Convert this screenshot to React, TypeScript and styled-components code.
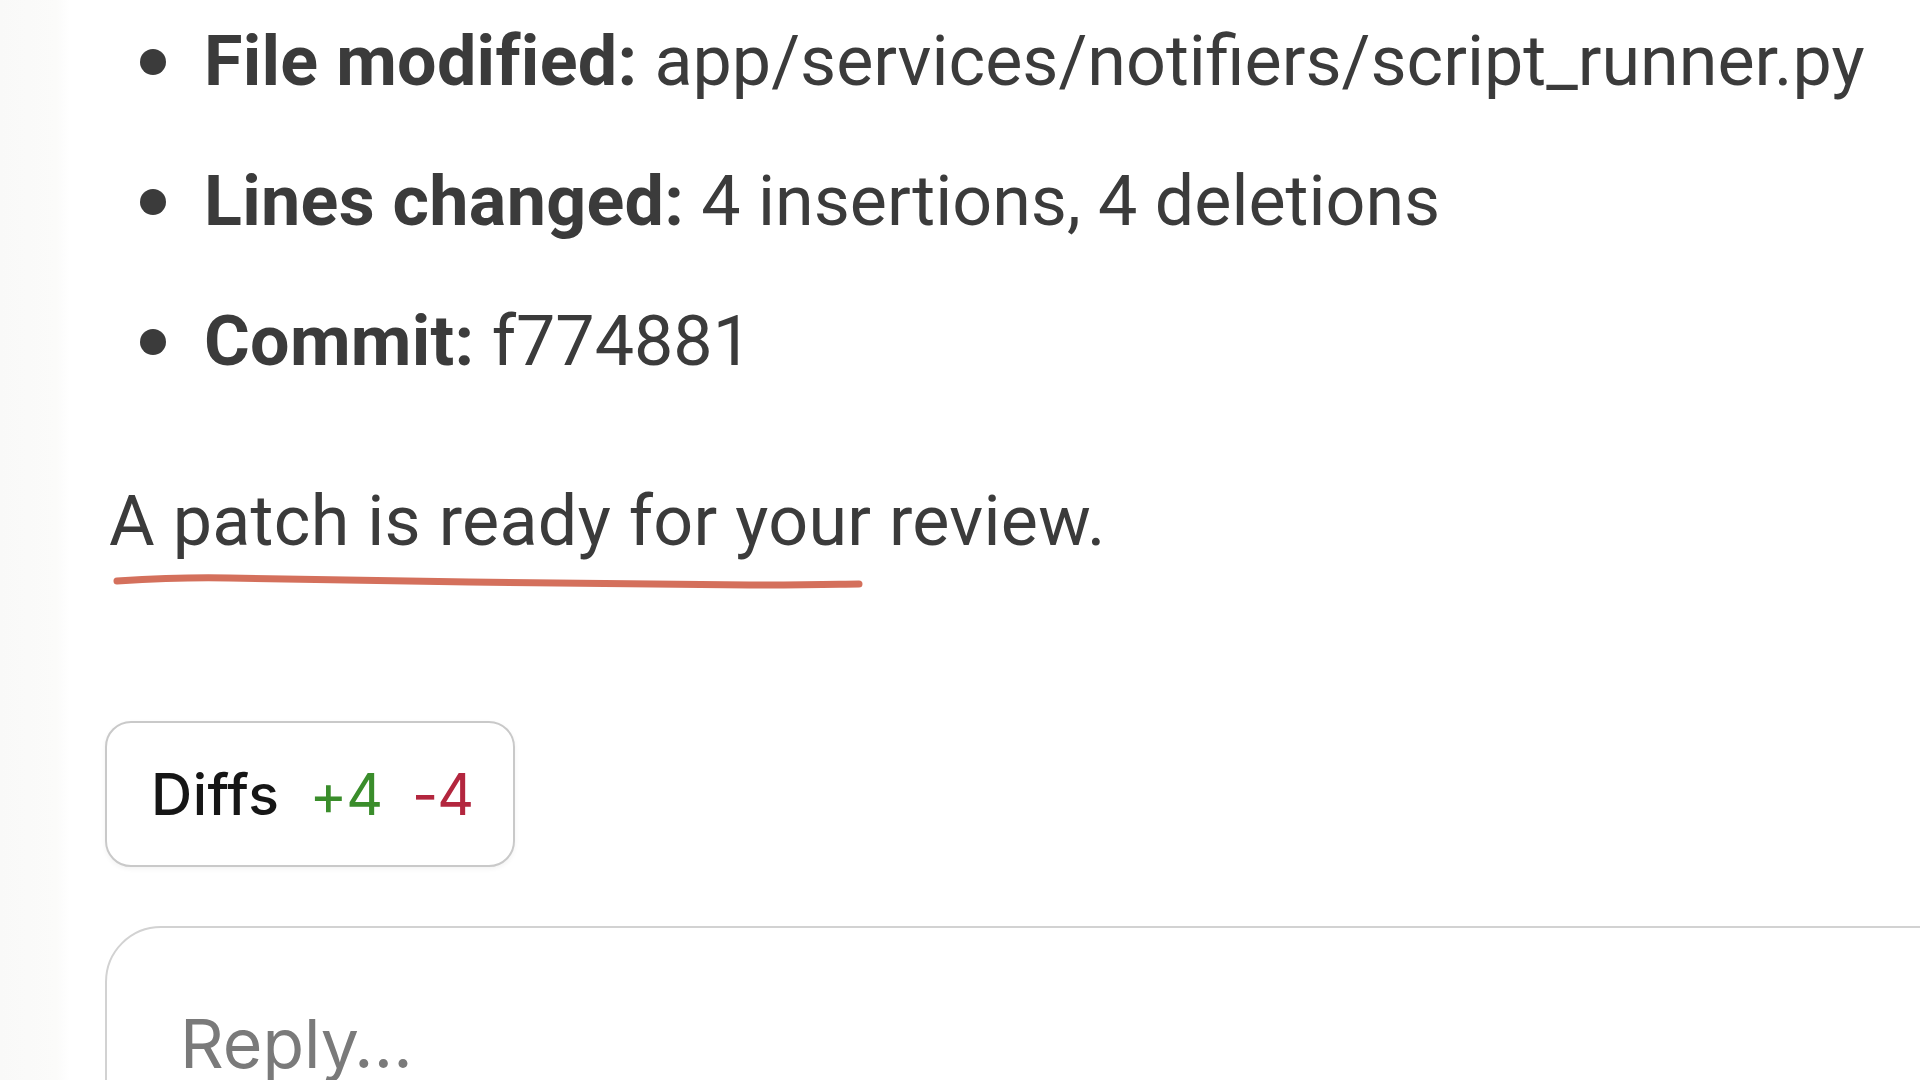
import React from "react";
import styled, { createGlobalStyle } from "styled-components";

const GlobalStyle = createGlobalStyle`
    html, body {
        margin: 0;
        padding: 0;
        background: #ffffff;
        overflow: hidden;
    }
    body {
        font-family: Roboto, "Liberation Sans", sans-serif;
        color: #3b3b3b;
    }
`;

const Page = styled.div`
    display: flex;
    width: 1920px;
    height: 1080px;
    overflow: hidden;
`;

const Gutter = styled.div`
    flex: 0 0 70px;
    background: linear-gradient(to right, #f9f9f8 0%, #fbfbfa 80%, #ffffff 100%);
`;

const Main = styled.main`
    flex: 1;
    display: flex;
    flex-direction: column;
    padding: 16px 0 0 35px;
    min-width: 0;

    & > * {
        flex-shrink: 0;
    }
`;

const List = styled.ul`
    list-style: none;
    margin: 0;
    padding: 0 0 0 35px;
    display: flex;
    flex-direction: column;
    gap: 49px;
`;

const Item = styled.li`
    display: flex;
    align-items: center;
    height: 91px;
    font-size: 70px;
    line-height: 91px;
    white-space: nowrap;
`;

const Dot = styled.span`
    flex: 0 0 26px;
    width: 26px;
    height: 26px;
    border-radius: 50%;
    background: #3b3b3b;
    margin-right: 38px;
`;

const Label = styled.strong`
    font-weight: 700;
    margin-right: 17px;
    letter-spacing: 0.3px;
`;

const Note = styled.p`
    position: relative;
    margin: 89px 0 0 4px;
    font-size: 70px;
    line-height: 91px;
    letter-spacing: 0.3px;
    white-space: nowrap;
`;

const Scribble = styled.svg`
    position: absolute;
    left: 0;
    top: 97px;
    width: 760px;
    height: 20px;
    overflow: visible;
`;

const DiffsButton = styled.button`
    align-self: flex-start;
    display: flex;
    align-items: center;
    gap: 30px;
    height: 146px;
    margin-top: 154px;
    padding: 0 40px 0 44px;
    background: #ffffff;
    border: 2px solid #c9c9c9;
    border-radius: 26px;
    box-shadow: 0 2px 5px rgba(0, 0, 0, 0.05);
    font-family: Inter, "Liberation Sans", sans-serif;
    font-size: 57px;
    cursor: pointer;
`;

const Stat = styled.span<{ $tone: "plain" | "add" | "del" }>`
    color: ${(p) =>
        p.$tone === "add" ? "#3a8d2b" : p.$tone === "del" ? "#b3263e" : "#161616"};
    font-weight: ${(p) => (p.$tone === "plain" ? 500 : 400)};
    letter-spacing: ${(p) => (p.$tone === "plain" ? "0.5px" : "-1px")};
`;

const ReplyBox = styled.div`
    margin-top: 59px;
    width: calc(100% + 120px);
    height: 320px;
    box-sizing: border-box;
    border: 2px solid #d2d2d2;
    border-radius: 56px;
    background: #ffffff;
    padding: 81px 0 0 73px;
`;

const ReplyInput = styled.div`
    font-family: Inter, "Liberation Sans", sans-serif;
    font-size: 68px;
    line-height: 1;
    color: #7a7a7a;
`;

const details = [
    { label: "File modified:", value: "app/services/notifiers/script_runner.py" },
    { label: "Lines changed:", value: "4 insertions, 4 deletions" },
    { label: "Commit:", value: "f774881" },
];

function App() {
    return (
        <>
            <GlobalStyle />
            <Page>
                <Gutter />
                <Main>
                    <List>
                        {details.map((d) => (
                            <Item key={d.label}>
                                <Dot />
                                <Label>{d.label}</Label>
                                {d.value}
                            </Item>
                        ))}
                    </List>
                    <Note>
                        A patch is ready for your review.
                        <Scribble viewBox="0 0 760 20">
                            <path
                                d="M8 8 C 40 6, 80 4, 120 5 S 260 8, 360 9 S 560 12, 640 12 S 730 11, 750 11"
                                fill="none"
                                stroke="#d4705c"
                                strokeWidth="7"
                                strokeLinecap="round"
                            />
                        </Scribble>
                    </Note>
                    <DiffsButton>
                        <Stat $tone="plain">Diffs</Stat>
                        <Stat $tone="add">+4</Stat>
                        <Stat $tone="del">-4</Stat>
                    </DiffsButton>
                    <ReplyBox>
                        <ReplyInput>Reply…</ReplyInput>
                    </ReplyBox>
                </Main>
            </Page>
        </>
    );
}

export default App;
